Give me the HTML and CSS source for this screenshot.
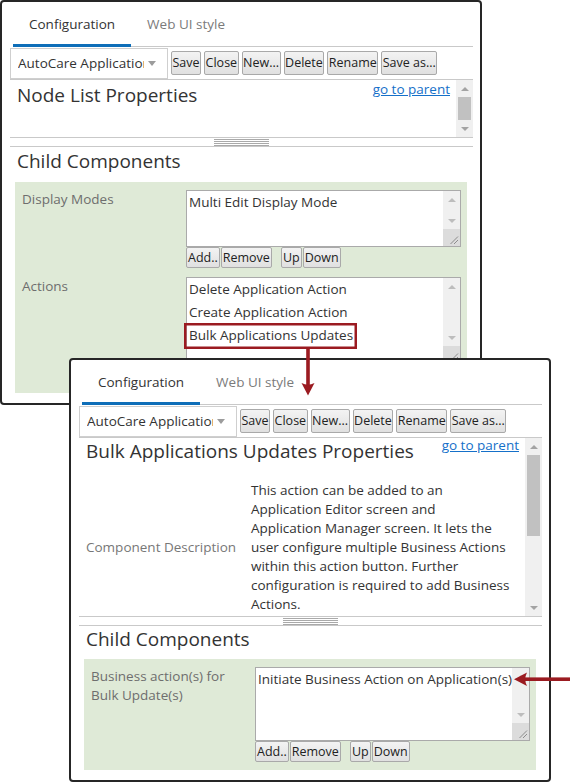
FILE: index.html
```html
<!DOCTYPE html>
<html lang="en">
<head>
<meta charset="utf-8">
<title>Bulk Applications Updates Properties</title>
<link rel="stylesheet" href="styles.css">
</head>
<body>
<div class="desk">

  <section class="win win1">
    <nav class="tabs">
      <span class="tab active">Configuration</span>
      <span class="tab">Web UI style</span>
    </nav>
    <div class="toolbar">
      <div class="select"><span class="select-text">AutoCare Applications</span><span class="caret"></span></div>
      <button class="btn">Save</button>
      <button class="btn">Close</button>
      <button class="btn">New...</button>
      <button class="btn">Delete</button>
      <button class="btn">Rename</button>
      <button class="btn">Save as...</button>
    </div>
    <div class="props props-short">
      <div class="props-body">
        <div class="props-head">
          <h2 class="props-title">Node List Properties</h2>
          <a class="parent-link" href="#">go to parent</a>
        </div>
      </div>
      <div class="vbar">
        <span class="arrow up"></span>
        <span class="track"><span class="thumb thumb-full"></span></span>
        <span class="arrow down"></span>
      </div>
    </div>
    <div class="splitter"><span class="grip"></span></div>
    <h2 class="child-title">Child Components</h2>
    <div class="panel">
      <div class="field-label">Display Modes</div>
      <div class="field-control">
        <div class="listbox lb-modes">
          <ul class="items"><li>Multi Edit Display Mode</li></ul>
          <div class="vbar lb-bar">
            <span class="arrow up"></span>
            <span class="track"></span>
            <span class="arrow down"></span>
            <span class="resizer"><svg width="17" height="17" viewBox="0 0 17 17"><path d="M15 7.5 L7.5 15 M15 11 L11 15" stroke="#8c8c8c" stroke-width="1" fill="none"/></svg></span>
          </div>
        </div>
        <div class="lbtns">
          <button class="btn btn-sm">Add..</button>
          <button class="btn btn-sm">Remove</button>
          <button class="btn btn-sm btn-gap">Up</button>
          <button class="btn btn-sm">Down</button>
        </div>
      </div>

      <div class="field-label">Actions</div>
      <div class="field-control">
        <div class="listbox lb-actions">
          <ul class="items">
            <li>Delete Application Action</li>
            <li>Create Application Action</li>
            <li>Bulk Applications Updates</li>
          </ul>
          <div class="vbar lb-bar">
            <span class="arrow up"></span>
            <span class="track"></span>
            <span class="arrow down"></span>
            <span class="resizer"><svg width="17" height="17" viewBox="0 0 17 17"><path d="M15 7.5 L7.5 15 M15 11 L11 15" stroke="#8c8c8c" stroke-width="1" fill="none"/></svg></span>
          </div>
        </div>
        <div class="lbtns">
          <button class="btn btn-sm">Add..</button>
          <button class="btn btn-sm">Remove</button>
          <button class="btn btn-sm btn-gap">Up</button>
          <button class="btn btn-sm">Down</button>
        </div>
      </div>
    </div>
  </section>

  <section class="win win2">
    <nav class="tabs">
      <span class="tab active">Configuration</span>
      <span class="tab">Web UI style</span>
    </nav>
    <div class="toolbar">
      <div class="select"><span class="select-text">AutoCare Applications</span><span class="caret"></span></div>
      <button class="btn">Save</button>
      <button class="btn">Close</button>
      <button class="btn">New...</button>
      <button class="btn">Delete</button>
      <button class="btn">Rename</button>
      <button class="btn">Save as...</button>
    </div>
    <div class="props props-tall">
      <div class="props-body">
        <div class="props-scroll">
          <div class="props-head">
            <h2 class="props-title">Bulk Applications Updates Properties</h2>
            <a class="parent-link" href="#">go to parent</a>
          </div>
          <div class="desc-row">
            <div class="desc-label">Component Description</div>
            <p class="desc-text">This action can be added to an<br>Application Editor screen and<br>Application Manager screen. It lets the<br>user configure multiple Business Actions<br>within this action button. Further<br>configuration is required to add Business<br>Actions.</p>
          </div>
        </div>
      </div>
      <div class="vbar">
        <span class="arrow up"></span>
        <span class="track"><span class="thumb thumb-part"></span></span>
        <span class="arrow down"></span>
      </div>
    </div>
    <div class="splitter"><span class="grip"></span></div>
    <h2 class="child-title">Child Components</h2>
    <div class="panel">
      <div class="field-label">Business action(s) for Bulk Update(s)</div>
      <div class="field-control">
        <div class="listbox lb-business">
          <ul class="items"><li>Initiate Business Action on Application(s)</li></ul>
          <div class="vbar lb-bar">
            <span class="arrow up"></span>
            <span class="track"></span>
            <span class="arrow down"></span>
            <span class="resizer"><svg width="17" height="17" viewBox="0 0 17 17"><path d="M15 7.5 L7.5 15 M15 11 L11 15" stroke="#8c8c8c" stroke-width="1" fill="none"/></svg></span>
          </div>
        </div>
        <div class="lbtns">
          <button class="btn btn-sm">Add..</button>
          <button class="btn btn-sm">Remove</button>
          <button class="btn btn-sm btn-gap">Up</button>
          <button class="btn btn-sm">Down</button>
        </div>
      </div>
    </div>
  </section>

  <svg class="annot" width="570" height="782" viewBox="0 0 570 782" aria-hidden="true">
    <rect x="185.25" y="324.25" width="170.5" height="23.5" fill="none" stroke="#9b1b21" stroke-width="2.5"/>
    <rect x="306.2" y="348.5" width="3.6" height="37" fill="#9b1b21"/>
    <path d="M301.5 383 Q308 386.5 314.5 383 L308 395.5 Z" fill="#9b1b21"/>
    <rect x="523" y="677.4" width="47" height="3.6" fill="#9b1b21"/>
    <path d="M527 672.5 Q523.5 679.2 527 685.9 L514 679.2 Z" fill="#9b1b21"/>
  </svg>
</div>
</body>
</html>
```

FILE: styles.css
```css
* { box-sizing: border-box; }

html, body {
  margin: 0;
  padding: 0;
  background: #fff;
}

body {
  font-family: "Open Sans", "Noto Sans", sans-serif;
  font-size: 13.5px;
  color: #333;
}

.desk {
  position: relative;
  width: 570px;
  height: 782px;
  overflow: hidden;
}

/* windows */
.win {
  position: absolute;
  display: flex;
  flex-direction: column;
  background: #fff;
  border: 2px solid #262626;
  border-radius: 4px;
  padding: 0 7px 0 8px;
  overflow: hidden;
}
.win > * { flex-shrink: 0; }

.win1 { left: 0; top: 0; width: 482px; height: 405px; }
.win2 { left: 69px; top: 358px; width: 482px; height: 424px; z-index: 2; }

/* tabs */
.tabs {
  display: flex;
  height: 45px;
  margin-left: 3px;
  border-bottom: 1px solid #c9c9c9;
}
.tab {
  height: 45px;
  padding: 12px 16px 0;
  line-height: 20px;
  color: #7b7b7b;
  white-space: nowrap;
}
.tab.active {
  color: #333;
  border-bottom: 3px solid #0e6eb8;
}

/* toolbar */
.toolbar {
  display: flex;
  align-items: center;
  height: 32px;
}
.select {
  display: flex;
  align-items: center;
  width: 158px;
  height: 31px;
  padding: 0 11px 0 7px;
  border: 1px solid #cfcfcf;
  background: #fff;
  line-height: 18px;
}
.select-text {
  width: 126px;
  overflow: hidden;
  white-space: nowrap;
}
.caret {
  margin-left: 4px;
  width: 0;
  height: 0;
  border-left: 4px solid transparent;
  border-right: 4px solid transparent;
  border-top: 5px solid #9c9c9c;
}

.btn {
  font-family: inherit;
  font-size: 12.5px;
  color: #222;
  height: 24px;
  line-height: 22px;
  padding: 0 0.5px;
  margin: 0 0 0 3px;
  border: 1px solid #a9a9a9;
  border-radius: 2px;
  background: linear-gradient(#f3f3f3, #e0e0e0);
  white-space: nowrap;
}

/* properties area */
.props {
  display: flex;
  border-top: 1px solid #c9c9c9;
  border-bottom: 1px solid #c9c9c9;
}
.props-short { height: 59px; }
.props-tall { height: 180px; }

.props-body {
  flex: 1;
  min-width: 0;
  overflow: hidden;
}
.win2 .props-scroll { margin-top: -2px; }

.props-head {
  display: flex;
  align-items: flex-start;
}
.props-title {
  margin: 2px 0 0 7px;
  font-size: 19px;
  font-weight: normal;
  line-height: 26px;
  white-space: nowrap;
}
.parent-link {
  margin-left: auto;
  padding-right: 6px;
  line-height: 18px;
  color: #1570c9;
  text-decoration: underline;
  white-space: nowrap;
}

.desc-row {
  display: flex;
  align-items: center;
  margin-top: 17px;
}
.desc-label {
  width: 172px;
  flex: none;
  padding-left: 7px;
  color: #777;
  line-height: 19px;
}
.desc-text {
  margin: 0;
  line-height: 19px;
  white-space: nowrap;
}

/* scrollbars */
.vbar {
  width: 17px;
  flex: none;
  display: flex;
  flex-direction: column;
  background: #f0f0f0;
}
.arrow {
  height: 17px;
  flex: none;
  display: flex;
  align-items: center;
  justify-content: center;
}
.arrow::before {
  content: "";
  width: 0;
  height: 0;
  border-left: 4px solid transparent;
  border-right: 4px solid transparent;
}
.arrow.up::before { border-bottom: 4px solid #a3a3a3; }
.arrow.down::before { border-top: 4px solid #a3a3a3; }
.lb-bar .arrow.up::before { border-bottom-color: #bdbdbd; }
.lb-bar .arrow.down::before { border-top-color: #bdbdbd; }

.track {
  flex: 1;
  display: flex;
  flex-direction: column;
  padding: 0 2px;
}
.thumb { background: #c1c1c1; }
.thumb-full { flex: 1; }
.thumb-part { height: 81px; }

.resizer {
  height: 17px;
  flex: none;
  background: #dcdcdc;
}
.resizer svg { display: block; }

/* splitter */
.splitter {
  display: flex;
  justify-content: center;
  height: 9px;
  padding-top: 1px;
  border-bottom: 1px solid #c9c9c9;
}
.grip {
  width: 55px;
  height: 7px;
  background: repeating-linear-gradient(#a9a9a9 0 1px, transparent 1px 2px);
}

.child-title {
  margin: 1px 0 8px 7px;
  font-size: 19px;
  font-weight: normal;
  line-height: 26px;
}
.win2 .child-title { margin: 0 0 7px 7px; }

/* green child panel */
.panel {
  display: grid;
  grid-template-columns: 164px 275px;
  row-gap: 9px;
  margin: 0 6px 0 5px;
  padding: 8px 6px 8px 7px;
  background: #dfead7;
}
.field-label {
  padding-right: 14px;
  color: #6e6e6e;
  line-height: 19px;
}
.field-control {
  display: flex;
  flex-direction: column;
}

.listbox {
  display: flex;
  border: 1px solid #aaa;
  background: #fff;
}
.lb-modes { height: 57px; }
.lb-actions { height: 87px; }
.lb-business { height: 74px; }

.items {
  flex: 1;
  min-width: 0;
  margin: 0;
  padding: 0 0 0 2px;
  list-style: none;
  overflow: hidden;
}
.items li {
  line-height: 23px;
  white-space: nowrap;
}

.lbtns {
  display: flex;
  height: 21px;
}
.btn-sm {
  height: 21px;
  line-height: 19px;
  padding: 0 1px;
  margin-left: 1px;
}
.btn-sm:first-child { margin-left: 0; }
.btn-sm.btn-gap { margin-left: 9px; }

/* annotation overlay */
.annot {
  position: absolute;
  left: 0;
  top: 0;
  z-index: 5;
  pointer-events: none;
}
```
